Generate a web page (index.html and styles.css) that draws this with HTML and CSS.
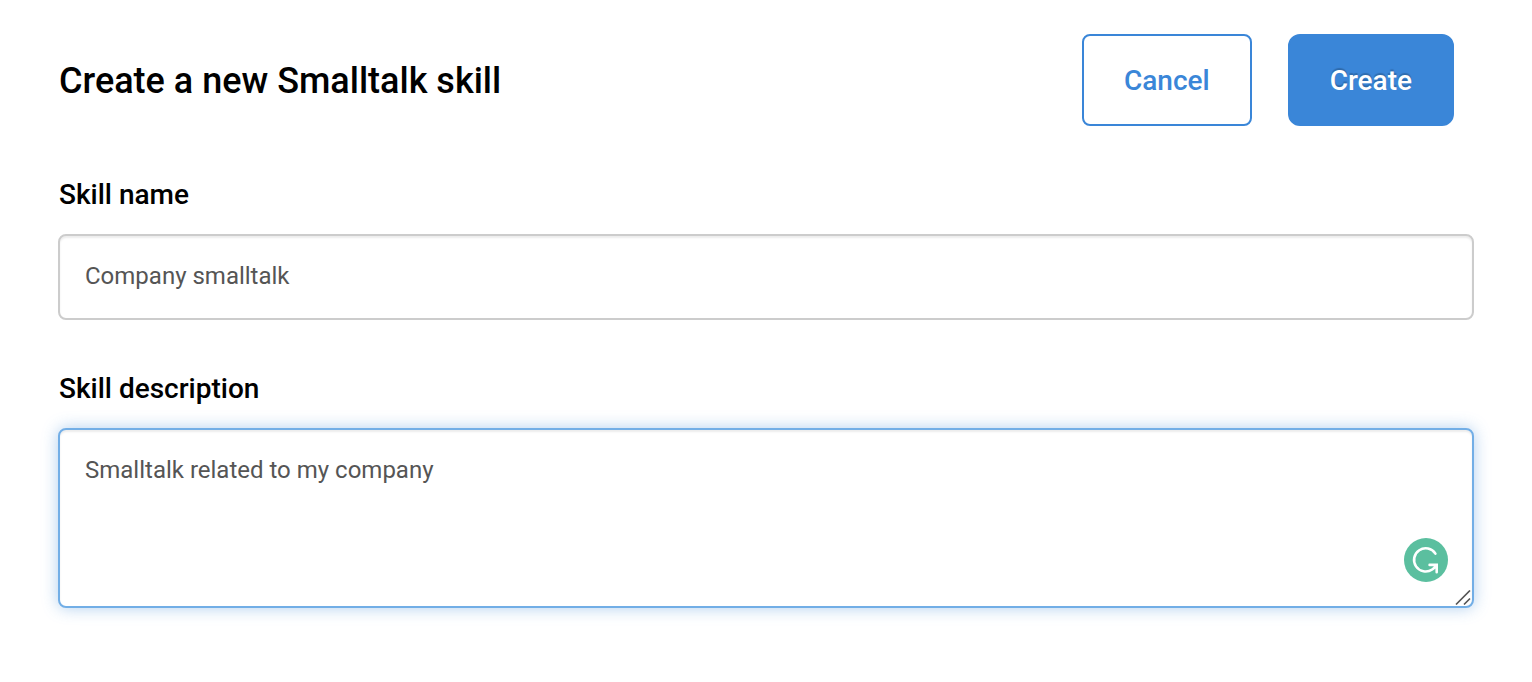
FILE: index.html
```html
<!DOCTYPE html>
<html lang="en">
<head>
<meta charset="utf-8">
<meta name="viewport" content="width=device-width, initial-scale=1">
<title>Create a new Smalltalk skill</title>
<link rel="stylesheet" href="styles.css">
</head>
<body>
<form class="skill-form">
  <header class="header">
    <h1 class="title">Create a new Smalltalk skill</h1>
    <div class="actions">
      <button class="button button-outline" type="button">Cancel</button>
      <button class="button button-primary" type="submit">Create</button>
    </div>
  </header>
  <div class="field">
    <label class="label" for="skill-name">Skill name</label>
    <input class="control" id="skill-name" type="text" value="Company smalltalk">
  </div>
  <div class="field">
    <label class="label" for="skill-description">Skill description</label>
    <div class="area-wrap">
      <textarea class="control control-area" id="skill-description">Smalltalk related to my company</textarea>
      <svg class="checker" viewBox="0 0 44 44" aria-hidden="true">
        <circle cx="22" cy="22" r="22" fill="#5bbf9f"/>
        <path d="M31.4 15.6A11.6 11.6 0 1 0 28.2 31.5Q30.6 29.8 32.4 27.2M25.6 26.9H32.7V34.2" fill="none" stroke="#fff" stroke-width="2.6" stroke-linecap="round"/>
      </svg>
      <svg class="grip" viewBox="0 0 16 16" aria-hidden="true">
        <path d="M1 14.5L15 .5M9 14.5L15 8.5" fill="none" stroke="#555" stroke-width="1.7"/>
      </svg>
    </div>
  </div>
</form>
</body>
</html>
```
FILE: styles.css
```css
* { box-sizing: border-box; }
body {
  margin: 0;
  background: #fff;
  color: #000;
  font-family: Roboto, sans-serif;
}
.skill-form { padding: 34px 58px; }
.header {
  display: flex;
  align-items: center;
  justify-content: space-between;
  padding: 0 20px 0 1px;
  margin-bottom: 52px;
}
.title {
  margin: 0;
  padding-top: 2px;
  font-size: 36px;
  font-weight: 500;
  line-height: 44px;
}
.actions { display: flex; gap: 36px; }
.button {
  height: 92px;
  padding: 2px 40px 0;
  border: 2px solid #3a86d8;
  border-radius: 8px;
  font: 500 28px/32px Roboto, sans-serif;
}
.button-outline { background: #fff; color: #3a86d8; }
.button-primary {
  border-radius: 12px;
  background: #3a86d8;
  color: #fff;
  text-shadow: 0 -2px 1px rgba(0, 0, 0, .2);
}
.field { margin-bottom: 52px; }
.label {
  display: block;
  margin: 0 1px 22px;
  font-size: 28px;
  font-weight: 500;
  line-height: 34px;
}
.control {
  display: block;
  width: 100%;
  height: 86px;
  padding: 24px 25px 26px;
  border: 2px solid #ccc;
  border-radius: 8px;
  background: #fff;
  box-shadow: inset 0 2px 2px rgba(0, 0, 0, .08);
  color: #555;
  font: 400 24px/32px Roboto, sans-serif;
  outline: 0;
}
.control-area {
  height: 180px;
  border-color: #72aee6;
  box-shadow: inset 0 2px 2px rgba(0, 0, 0, .08), 0 0 16px rgba(58, 134, 216, .4);
  resize: none;
}
.area-wrap { position: relative; }
.checker {
  position: absolute;
  right: 26px;
  bottom: 26px;
  width: 44px;
  height: 44px;
}
.grip {
  position: absolute;
  right: 3px;
  bottom: 2px;
  width: 16px;
  height: 16px;
}
```
